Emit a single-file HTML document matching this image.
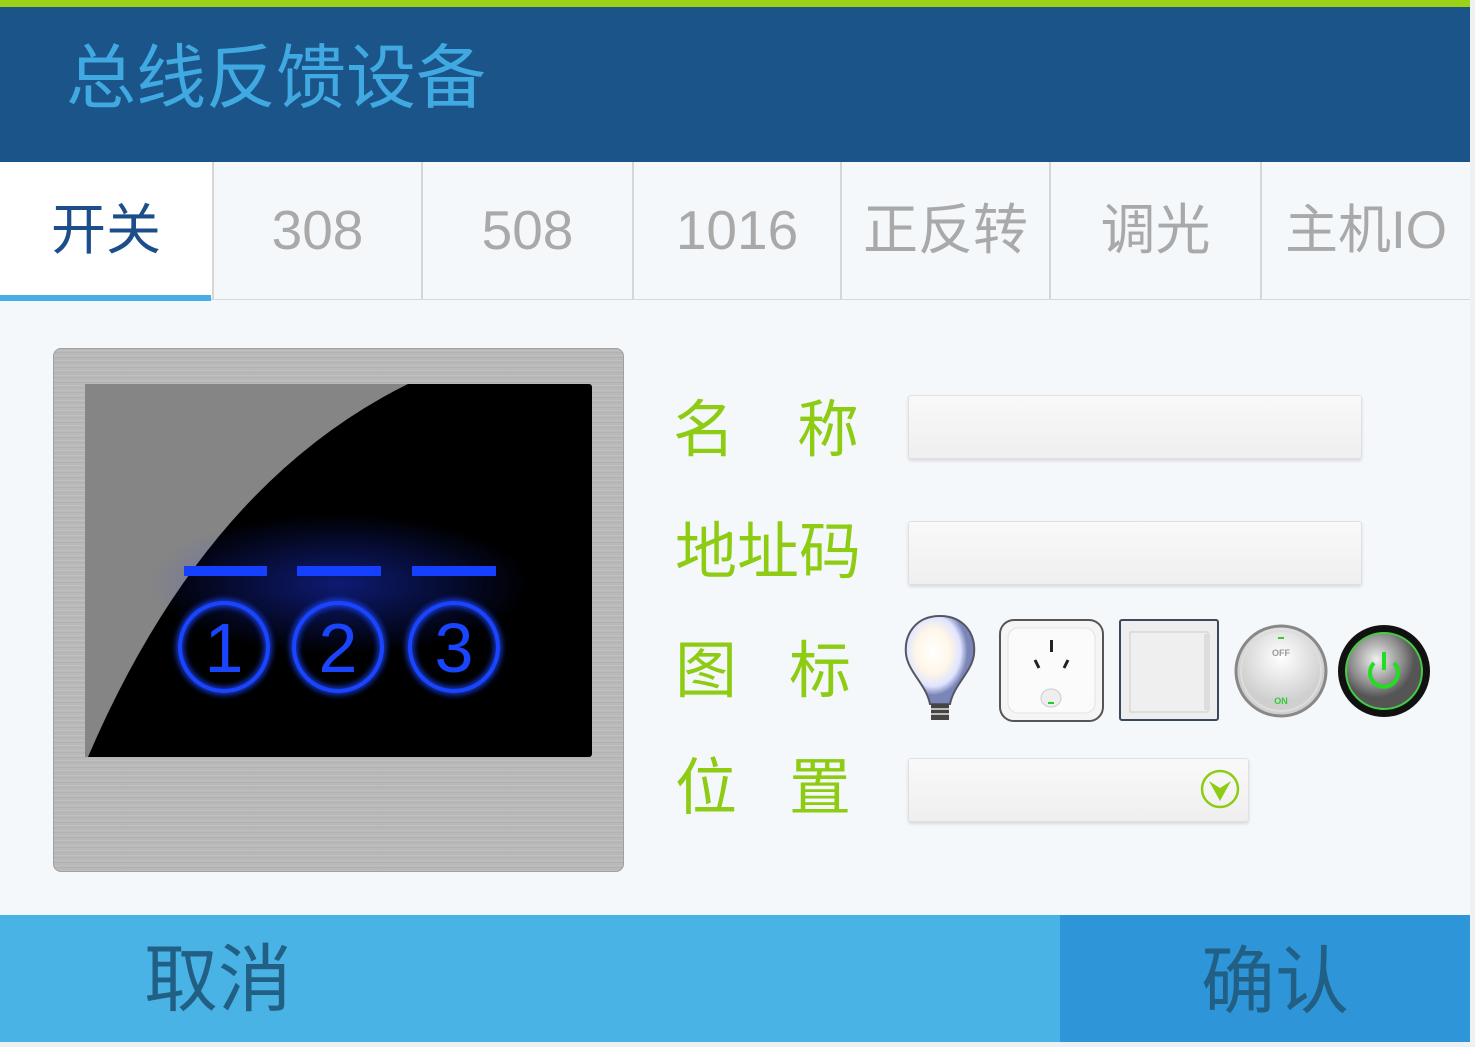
<!DOCTYPE html>
<html><head><meta charset="utf-8"><style>
*{margin:0;padding:0;box-sizing:border-box}
body{width:1475px;height:1047px;background:#eef1f4;position:relative;overflow:hidden;font-family:"Liberation Sans","Noto Sans CJK SC",sans-serif}
.a{position:absolute}
.tab{position:absolute;top:162px;height:137px;background:#f5f8fb;border-left:2px solid #d4d6d8;color:#a9a9a9;font-size:55px;text-align:center;line-height:137px}
.lbl{position:absolute;color:#8dcc12;font-size:62px;line-height:62px}
.inp{position:absolute;background:linear-gradient(#f9f9f9,#efefef);border:1px solid #e0e0e0;border-radius:3px;box-shadow:0 2px 3px rgba(0,0,0,.12)}
</style></head><body>
<div class="a" style="left:0;top:0;width:1470px;height:7px;background:#9bd117"></div>
<div class="a" style="left:0;top:7px;width:1470px;height:155px;background:#1a5488"></div>
<div class="a" style="left:66px;top:36px;color:#40a9e2;font-size:70px;line-height:84px">总线反馈设备</div>
<div class="a" style="left:0;top:162px;width:1470px;height:753px;background:#f5f8fb"></div>
<div class="a" style="left:0;top:162px;width:212px;height:137px;background:#fff;color:#1c4f8a;font-size:55px;text-align:center;line-height:137px">开关</div>
<div class="a" style="left:0;top:295px;width:211px;height:6px;background:#46b0e6"></div>
<div class="a" style="left:211px;top:298px;width:1259px;height:2px;background:#d6d8da"></div>
<div class="tab" style="left:212px;width:209px">308</div>
<div class="tab" style="left:421px;width:211px">508</div>
<div class="tab" style="left:632px;width:208px">1016</div>
<div class="tab" style="left:840px;width:209px">正反转</div>
<div class="tab" style="left:1049px;width:211px">调光</div>
<div class="tab" style="left:1260px;width:210px;font-size:53px">主机IO</div>

<div class="a" style="left:53px;top:348px;width:571px;height:524px;border-radius:8px;background:repeating-linear-gradient(#b3b3b3 0,#c4c4c4 2px,#aeaeae 3px,#bdbdbd 5px);border:1px solid #a0a0a0"></div>
<svg class="a" style="left:85px;top:384px" width="507" height="373">
<defs><radialGradient id="g" cx=".5" cy=".5" r=".5"><stop offset="0" stop-color="#1e3cff" stop-opacity=".45"/><stop offset="1" stop-color="#1e3cff" stop-opacity="0"/></radialGradient>
<filter id="f"><feGaussianBlur stdDeviation="3"/></filter></defs>
<rect width="507" height="373" rx="3" fill="#000"/>
<path d="M0,0 L323,0 Q120,100 3,373 L0,373 Z" fill="#858585"/>
<ellipse cx="254" cy="200" rx="190" ry="70" fill="url(#g)"/>
<g fill="#1540ff"><rect x="99" y="182" width="83" height="10"/><rect x="212" y="182" width="84" height="10"/><rect x="327" y="182" width="84" height="10"/></g>
<g fill="none" stroke="#1a45ff" stroke-width="8" filter="url(#f)" opacity=".8"><circle cx="139" cy="263" r="44"/><circle cx="253" cy="263" r="44"/><circle cx="369" cy="263" r="44"/></g>
<g fill="none" stroke="#1a45ff" stroke-width="4"><circle cx="139" cy="263" r="44"/><circle cx="253" cy="263" r="44"/><circle cx="369" cy="263" r="44"/></g>
<g fill="#1a45ff" font-size="70" text-anchor="middle" font-family="Liberation Sans,sans-serif"><text x="139" y="288">1</text><text x="253" y="288">2</text><text x="369" y="288">3</text></g>
</svg>

<div class="lbl" style="top:400px;left:673px">名</div><div class="lbl" style="top:400px;left:797px">称</div>
<div class="lbl" style="top:522px;left:675px">地址码</div>
<div class="lbl" style="top:641px;left:675px">图</div><div class="lbl" style="top:641px;left:789px">标</div>
<div class="lbl" style="top:758px;left:675px">位</div><div class="lbl" style="top:758px;left:789px">置</div>
<div class="inp" style="left:908px;top:395px;width:454px;height:64px"></div>
<div class="inp" style="left:908px;top:521px;width:454px;height:64px"></div>
<div class="inp" style="left:908px;top:758px;width:341px;height:64px"></div>
<svg class="a" style="left:1199px;top:768px" width="42" height="42"><circle cx="21" cy="21" r="18" fill="none" stroke="#8dcc12" stroke-width="2.5"/><path d="M10,13 L21,33 L32,13 L21,20Z" fill="#8dcc12"/></svg>

<svg class="a" style="left:898px;top:612px" width="540" height="116">
<defs>
<radialGradient id="bl" cx=".4" cy=".4"><stop offset="0" stop-color="#fff"/><stop offset=".5" stop-color="#fff6e8"/><stop offset=".8" stop-color="#dfe4ff"/><stop offset="1" stop-color="#7a86b8"/></radialGradient>
<radialGradient id="kn" cx=".5" cy=".35"><stop offset="0" stop-color="#fff"/><stop offset="1" stop-color="#cfcfcf"/></radialGradient>
<radialGradient id="mt" cx=".4" cy=".35"><stop offset="0" stop-color="#f0f0f0"/><stop offset=".7" stop-color="#8a8a8a"/><stop offset="1" stop-color="#555"/></radialGradient>
</defs>
<path d="M42,4 C18,4 6,22 8,42 C10,60 28,72 32,92 L52,92 C56,72 74,60 76,42 C78,22 66,4 42,4Z" fill="url(#bl)" stroke="#556" stroke-width="2"/>
<rect x="33" y="92" width="18" height="16" fill="#444"/><rect x="33" y="96" width="18" height="2" fill="#bbb"/><rect x="33" y="101" width="18" height="2" fill="#bbb"/>
<rect x="102" y="8" width="103" height="101" rx="14" fill="#f5f5f5" stroke="#555" stroke-width="2"/>
<rect x="110" y="16" width="87" height="85" rx="10" fill="#fbfbfb" stroke="#e2e2e2"/>
<rect x="152" y="28" width="3" height="12" fill="#222"/><path d="M137,48 L141,56 M170,48 L166,56" stroke="#222" stroke-width="3"/>
<ellipse cx="153" cy="86" rx="10" ry="9" fill="#eee" stroke="#ccc"/><rect x="150" y="90" width="6" height="2" fill="#2c2"/>
<rect x="222" y="8" width="98" height="100" rx="2" fill="#eee" stroke="#3a4a5a" stroke-width="2"/>
<rect x="232" y="20" width="78" height="80" fill="#efefef" stroke="#ccc"/><rect x="306" y="22" width="6" height="76" fill="#ddd"/>
<circle cx="383" cy="59" r="45" fill="url(#kn)" stroke="#888" stroke-width="3"/><circle cx="383" cy="59" r="40" fill="none" stroke="#ddd" stroke-width="2"/>
<text x="383" y="44" font-size="9" fill="#999" text-anchor="middle" font-weight="bold">OFF</text>
<text x="383" y="92" font-size="9" fill="#3c3" text-anchor="middle" font-weight="bold">ON</text>
<rect x="380" y="25" width="6" height="2" fill="#3c3"/>
<circle cx="486" cy="59" r="46" fill="#111"/><circle cx="486" cy="59" r="38" fill="url(#mt)" stroke="#4c4" stroke-width="2"/>
<path d="M476,51 A14,14 0 1 0 496,51" fill="none" stroke="#2d2" stroke-width="4"/><rect x="484" y="40" width="4" height="18" fill="#2d2"/>
</svg>

<div class="a" style="left:0;top:915px;width:1060px;height:127px;background:#4ab3e6"></div>
<div class="a" style="left:1060px;top:915px;width:410px;height:127px;background:#2e95d8"></div>
<div class="a" style="left:144px;top:938px;color:#215f84;font-size:74px;line-height:84px">取消</div>
<div class="a" style="left:1201px;top:940px;color:#215f84;font-size:74px;line-height:84px">确认</div>
</body></html>
